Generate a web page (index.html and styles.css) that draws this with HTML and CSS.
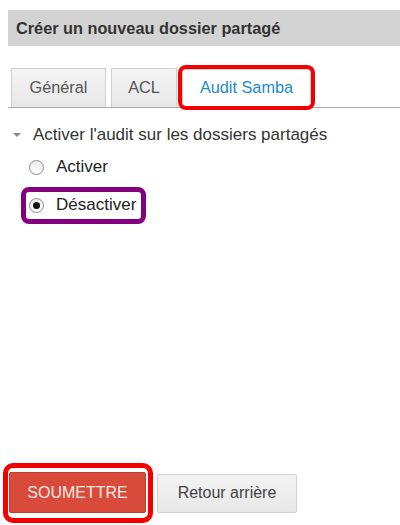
FILE: index.html
```html
<!DOCTYPE html>
<html lang="fr">
<head>
    <meta charset="UTF-8">
    <meta name="viewport" content="width=device-width, initial-scale=1.0">
    <title>Créer un nouveau dossier partagé</title>
    <link rel="stylesheet" href="styles.css">
</head>
<body>
    <div class="page">
        <div class="title_bar">Créer un nouveau dossier partagé</div>

        <div class="tabs">
            <a href="#" class="tab tab_general">Général</a>
            <a href="#" class="tab tab_acl">ACL</a>
            <a href="#" class="tab tab_audit active">Audit Samba</a>
        </div>

        <div class="section">
            <div class="section_head">
                <span class="caret"></span>
                <span>Activer l'audit sur les dossiers partagés</span>
            </div>
            <div class="options">
                <label class="option">
                    <input type="radio" name="audit" value="on">
                    <span>Activer</span>
                </label>
                <label class="option highlight_purple">
                    <input type="radio" name="audit" value="off" checked>
                    <span>Désactiver</span>
                </label>
            </div>
        </div>

        <div class="actions">
            <div class="highlight_red">
                <button class="submit_btn">SOUMETTRE</button>
            </div>
            <button class="back_btn">Retour arrière</button>
        </div>
    </div>
</body>
</html>
```

FILE: styles.css
```css
body {
    font-family: "Liberation Sans", Arial, sans-serif;
    background-color: #fff;
    margin: 0;
    padding: 0;
    overflow: hidden;
}
.page {
    height: 525px;
    box-sizing: border-box;
    padding: 10px 0 2px 8px;
    display: flex;
    flex-direction: column;
}
.title_bar {
    height: 36px;
    line-height: 36px;
    background: #d3d3d3;
    padding-left: 8px;
    font-size: 16.3px;
    font-weight: bold;
    color: #333;
}

/* tabs */
.tabs {
    display: flex;
    align-items: flex-end;
    gap: 5px;
    margin-top: 22px;
    padding-left: 3px;
    border-bottom: 1px solid #a9a9a9;
}
.tab {
    display: block;
    box-sizing: border-box;
    height: 39px;
    line-height: 37px;
    text-align: center;
    text-decoration: none;
    font-size: 16.3px;
    color: #555;
    border: 1px solid #d0d0d0;
    border-bottom: none;
    background: linear-gradient(#f4f4f4, #e7e7e7);
}
.tab_general {
    width: 95px;
}
.tab_acl {
    width: 66px;
}
.tab_audit {
    width: 129px;
}
.tab.active {
    height: 37px;
    line-height: 35px;
    margin-bottom: 1px;
    background: #fff;
    color: #1a8bc9;
    border-radius: 4px;
    box-shadow: 0 0 0 4px #f40000;
}

/* audit section */
.section {
    margin-top: 17px;
    padding-left: 5px;
    font-size: 17px;
    color: #333;
}
.section_head {
    display: flex;
    align-items: center;
    height: 20px;
}
.caret {
    width: 0;
    height: 0;
    border-left: 4px solid transparent;
    border-right: 4px solid transparent;
    border-top: 4px solid #8a8a8a;
    margin-right: 12px;
}
.options {
    padding-left: 17px;
    margin-top: 12px;
}
.option {
    display: flex;
    align-items: center;
    height: 20px;
    color: #222;
}
.option input {
    appearance: none;
    -webkit-appearance: none;
    box-sizing: border-box;
    flex: none;
    width: 15px;
    height: 15px;
    margin: 0 12px 0 -1px;
    border: 1px solid #8c8c8c;
    border-radius: 50%;
    background: linear-gradient(#ececec, #fff);
    position: relative;
}
.option input:checked::after {
    content: "";
    position: absolute;
    left: 3px;
    top: 3px;
    width: 7px;
    height: 7px;
    border-radius: 50%;
    background: #111;
}
.highlight_purple {
    display: inline-flex;
    margin: 10px 0 0 -9px;
    padding: 3px 5px 4px 4px;
    border: 5px solid #83007f;
    border-radius: 8px;
}

/* buttons */
.actions {
    margin-top: auto;
    display: flex;
    align-items: center;
    gap: 4px;
    margin-left: -5px;
}
.highlight_red {
    border: 5px solid #f40000;
    border-radius: 10px;
    padding: 4px 2px 5px 1px;
}
.submit_btn, .back_btn {
    display: block;
    font-family: "Liberation Sans", Arial, sans-serif;
    font-size: 16px;
    cursor: pointer;
}
.submit_btn {
    width: 137px;
    height: 41px;
    background: #d84a39;
    border: 1px solid #c23d2e;
    border-radius: 2px;
    color: #fde9e6;
}
.back_btn {
    width: 140px;
    height: 39px;
    background: linear-gradient(#f3f3f3, #e8e8e8);
    border: 1px solid #d2d2d2;
    border-radius: 2px;
    color: #444;
}
```
